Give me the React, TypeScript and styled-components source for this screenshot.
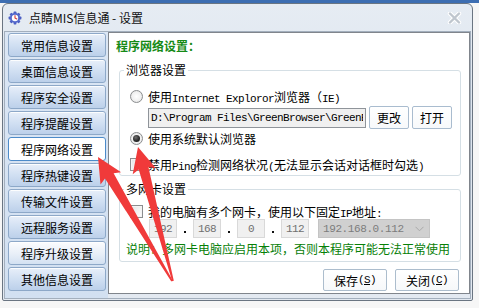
import React from 'react'
import styled, { createGlobalStyle } from 'styled-components'

const GlobalStyle = createGlobalStyle`
  html, body {
    margin: 0;
    padding: 0;
  }
  body {
    width: 479px;
    height: 308px;
    overflow: hidden;
    background: #f6f6f6;
    font-family: "Noto Sans CJK SC", "Liberation Sans", sans-serif;
    font-size: 12px;
    color: #000;
  }
`

const navItems = [
  '常用信息设置',
  '桌面信息设置',
  '程序安全设置',
  '程序提醒设置',
  '程序网络设置',
  '程序热键设置',
  '传输文件设置',
  '远程服务设置',
  '程序升级设置',
  '其他信息设置',
]

const ipParts = ['192', '168', '0', '112']

// red arrow drawn from its tip back to a tapered tail
const arrowPoints = (tx: number, ty: number, ex: number, ey: number) => {
  const L = Math.hypot(ex - tx, ey - ty)
  const ux = (ex - tx) / L
  const uy = (ey - ty) / L
  const nx = uy
  const ny = -ux
  const head = 25
  const wing = 12
  const shaft = 5
  const tail = 0.8
  const p = (along: number, side: number, ox = tx, oy = ty) =>
    `${(ox + ux * along + nx * side).toFixed(1)},${(oy + uy * along + ny * side).toFixed(1)}`
  return [
    p(0, 0),
    p(head, wing),
    p(head - 3, shaft),
    p(0, tail, ex, ey),
    p(0, -tail, ex, ey),
    p(head - 3, -shaft),
    p(head, -wing),
  ].join(' ')
}

export default function App() {
  return (
    <>
      <GlobalStyle />
      <Page>
        <DeskBar />
        <Window>
          <TitleBar>
            <svg width="14" height="14" viewBox="0 0 14 14">
              {[0, 45, 90, 135].map((a) => (
                <rect key={a} x="5.6" y="0.6" width="2.8" height="12.8" rx="0.6" fill="#4b5fc4" transform={`rotate(${a} 7 7)`} />
              ))}
              <circle cx="7" cy="7" r="5" fill="#5367cc" />
              <circle cx="7" cy="7" r="3.2" fill="#fff" />
              <path d="M7 7 L7 4.6 M7 7 L8.8 8" stroke="#d23a3a" strokeWidth="1.1" strokeLinecap="round" />
            </svg>
            <Title>点睛MIS信息通 - 设置</Title>
            <CloseGlyph width="15" height="12" viewBox="0 0 15 12">
              <path d="M3 1.5 L12 10.5 M12 1.5 L3 10.5" stroke="#fff" strokeWidth="4.4" strokeLinecap="round" />
              <path d="M3 1.5 L12 10.5 M12 1.5 L3 10.5" stroke="#bfc6ce" strokeWidth="2.4" strokeLinecap="round" />
            </CloseGlyph>
          </TitleBar>
          <Body>
            <Nav>
              {navItems.map((n) => (
                <NavButton key={n} $active={n === '程序网络设置'} $hover={n === '程序升级设置'}>
                  {n}
                </NavButton>
              ))}
            </Nav>
            <Content>
              <Heading>程序网络设置：</Heading>
              <Group $top={7} $bottom={3}>
                <legend>浏览器设置</legend>
                <OptionRow $top={10}>
                  <Radio />
                  <span>
                    使用<Latin>Internet Exploror</Latin>浏览器（<Latin>IE)</Latin>
                  </span>
                </OptionRow>
                <PathRow>
                  <PathInput readOnly value={'D:\\Program Files\\GreenBrowser\\GreenBrowser.exe'} />
                  <SmallButton>更改</SmallButton>
                  <SmallButton>打开</SmallButton>
                </PathRow>
                <OptionRow $top={1}>
                  <Radio $checked />
                  <span>使用系统默认浏览器</span>
                </OptionRow>
                <OptionRow $top={10}>
                  <Check />
                  <span>
                    禁用<Latin>Ping</Latin>检测网络状况<Latin>(</Latin>无法显示会话对话框时勾选<Latin>)</Latin>
                  </span>
                </OptionRow>
              </Group>
              <Group $top={5} $bottom={4}>
                <legend>多网卡设置</legend>
                <OptionRow $top={6}>
                  <Check />
                  <span>
                    我的电脑有多个网卡，使用以下固定<Latin>IP</Latin>地址<Latin>:</Latin>
                  </span>
                </OptionRow>
                <IpRow>
                  {ipParts.map((part, i) => (
                    <React.Fragment key={i}>
                      {i > 0 && <IpDot />}
                      <IpBox>{part}</IpBox>
                    </React.Fragment>
                  ))}
                  <Combo>
                    <span>192.168.0.112</span>
                    <svg width="9" height="6" viewBox="0 0 9 6">
                      <path d="M0.5 0.8 L4.5 4.8 L8.5 0.8" fill="none" stroke="#a9a9a9" strokeWidth="1" />
                    </svg>
                  </Combo>
                </IpRow>
                <Note>说明：多网卡电脑应启用本项，否则本程序可能无法正常使用</Note>
              </Group>
              <ButtonRow>
                <DlgButton>
                  保存<Latin>(<u>S</u>)</Latin>
                </DlgButton>
                <DlgButton>
                  关闭<Latin>(<u>C</u>)</Latin>
                </DlgButton>
              </ButtonRow>
            </Content>
          </Body>
        </Window>
        <Overlay width="479" height="308" viewBox="0 0 479 308">
          <polygon points={arrowPoints(98, 157, 172, 281)} fill="#f03a3a" />
          <polygon points={arrowPoints(138, 147, 173, 281)} fill="#f03a3a" />
        </Overlay>
      </Page>
    </>
  )
}

const Page = styled.div`
  position: relative;
  width: 479px;
  height: 308px;
  overflow: hidden;
`

const DeskBar = styled.div`
  height: 3px;
  background: #3d6eb2;
`

const Window = styled.div`
  width: 471px;
  height: 298px;
  margin-left: 2px;
  box-sizing: border-box;
  display: flex;
  flex-direction: column;
  padding: 0 1px 1px 1px;
  border: 1px solid #6a7582;
  border-radius: 6px 6px 2px 2px;
  background: linear-gradient(180deg, #e6ecf3 0%, #dce4ee 40%, #e3e9f1 100%);
`

const TitleBar = styled.div`
  height: 27px;
  display: flex;
  align-items: center;
  gap: 7px;
  padding-left: 4px;
`

const Title = styled.span`
  font-size: 12px;
  color: #111;
  white-space: nowrap;
`

const CloseGlyph = styled.svg`
  margin-left: auto;
  margin-right: 9px;
`

const Body = styled.div`
  flex: 1;
  display: flex;
  border: 1px solid #a3afbd;
  min-height: 0;
`

const Nav = styled.div`
  width: 103px;
  box-sizing: border-box;
  padding: 1px 2px 0 3px;
  display: flex;
  flex-direction: column;
  gap: 2px;
  background: linear-gradient(180deg, #dbe6f4 0%, #d2e0f1 100%);
`

const NavButton = styled.div<{ $active?: boolean; $hover?: boolean }>`
  height: 24px;
  box-sizing: border-box;
  display: flex;
  align-items: center;
  justify-content: center;
  border: 1px solid ${(p) => (p.$active ? '#4d8bc9' : '#8da8c8')};
  border-radius: 3px;
  background: ${(p) =>
    p.$active
      ? '#ffffff'
      : p.$hover
        ? 'linear-gradient(180deg, #fbfcfe 0%, #eaf0f8 50%, #d3e1f2 100%)'
        : 'linear-gradient(180deg, #e8eff9 0%, #d3e1f3 45%, #bcd0ea 100%)'};
  box-shadow: inset 0 1px 0 rgba(255, 255, 255, 0.85);
  font-size: 12px;
  color: #000;
  white-space: nowrap;
`

const Content = styled.div`
  flex: 1;
  margin-bottom: 4px;
  border: 1px solid #80858c;
  background: #fff;
  display: flex;
  flex-direction: column;
  min-width: 0;
`

const Heading = styled.div`
  margin: 4px 0 0 7px;
  line-height: 18px;
  font-size: 12px;
  font-weight: bold;
  color: #168a16;
`

const Group = styled.fieldset<{ $top: number; $bottom: number }>`
  margin: ${(p) => p.$top}px 8px 0 10px;
  padding: 0 0 ${(p) => p.$bottom}px 0;
  border: 1px solid #d5dfe5;
  border-radius: 3px;
  min-width: 0;

  legend {
    margin-left: 4px;
    padding: 0 2px;
    line-height: 16px;
    font-size: 12px;
  }
`

const OptionRow = styled.div<{ $top: number }>`
  display: flex;
  align-items: center;
  gap: 5px;
  height: 16px;
  margin: ${(p) => p.$top}px 0 0 10px;
  white-space: nowrap;
`

const Latin = styled.span`
  font-family: "Liberation Mono", monospace;
  font-size: 11px;
  letter-spacing: -0.6px;
`

const Radio = styled.span<{ $checked?: boolean }>`
  flex: none;
  width: 13px;
  height: 13px;
  box-sizing: border-box;
  border-radius: 50%;
  border: 1px solid #8b8d8f;
  background: radial-gradient(circle at 50% 50%, #ffffff 0%, #f1f1f1 55%, #d8d8d8 100%);
  display: flex;
  align-items: center;
  justify-content: center;

  &::after {
    content: '';
    display: ${(p) => (p.$checked ? 'block' : 'none')};
    width: 7px;
    height: 7px;
    border-radius: 50%;
    background: radial-gradient(circle at 40% 35%, #707070 0%, #262626 60%, #111 100%);
  }
`

const Check = styled.span`
  flex: none;
  width: 13px;
  height: 13px;
  box-sizing: border-box;
  border: 1px solid #8b8d8f;
  background: linear-gradient(135deg, #e4e4e4 0%, #ffffff 100%);
  box-shadow: inset 0 0 0 1px #f4f4f4;
`

const PathRow = styled.div`
  display: flex;
  align-items: center;
  gap: 3px;
  height: 23px;
  margin: 2px 0 0 28px;
`

const PathInput = styled.input`
  width: 218px;
  height: 20px;
  box-sizing: border-box;
  margin: 0;
  padding: 0 2px;
  border: 1px solid #8f949a;
  background: #f0f0f0;
  color: #000;
  font-family: "Liberation Mono", monospace;
  font-size: 11px;
  letter-spacing: -0.6px;
  outline: none;
`

const SmallButton = styled.div`
  width: 40px;
  height: 23px;
  box-sizing: border-box;
  display: flex;
  align-items: center;
  justify-content: center;
  border: 1px solid #a9bccf;
  border-radius: 2px;
  background: linear-gradient(180deg, #ffffff 0%, #f7f9fb 100%);
  font-size: 12px;
`

const IpRow = styled.div`
  display: flex;
  align-items: center;
  height: 19px;
  margin-left: 29px;
`

const IpBox = styled.div`
  width: 28px;
  height: 19px;
  box-sizing: border-box;
  display: flex;
  align-items: center;
  justify-content: center;
  border: 1px solid #d9d9d9;
  background: #f0f0f0;
  color: #6f6f6f;
  font-family: "Liberation Mono", monospace;
  font-size: 11px;
  letter-spacing: -0.6px;
`

const IpDot = styled.div`
  width: 16px;
  height: 19px;
  display: flex;
  align-items: flex-end;
  justify-content: center;
  padding-bottom: 5px;
  box-sizing: border-box;

  &::after {
    content: '';
    width: 2px;
    height: 2px;
    background: #111;
  }
`

const Combo = styled.div`
  width: 112px;
  height: 19px;
  box-sizing: border-box;
  margin-left: 9px;
  padding: 0 5px 0 4px;
  display: flex;
  align-items: center;
  justify-content: space-between;
  border: 1px solid #c4c4c4;
  background: #d0d0d0;
  color: #7c7c7c;
  font-family: "Liberation Mono", monospace;
  font-size: 11px;
  letter-spacing: -0.4px;
`

const Note = styled.div`
  margin: 3px 0 0 6px;
  line-height: 16px;
  color: #078007;
  white-space: nowrap;
`

const ButtonRow = styled.div`
  display: flex;
  justify-content: flex-end;
  gap: 8px;
  margin-top: 7px;
  padding-right: 10px;
`

const DlgButton = styled.div`
  width: 64px;
  height: 22px;
  box-sizing: border-box;
  display: flex;
  align-items: center;
  justify-content: center;
  border: 1px solid #acbdcd;
  border-radius: 2px;
  background: linear-gradient(180deg, #ffffff 0%, #f6f8fa 100%);
  font-size: 12px;
`

const Overlay = styled.svg`
  position: absolute;
  left: 0;
  top: 0;
  pointer-events: none;
`
